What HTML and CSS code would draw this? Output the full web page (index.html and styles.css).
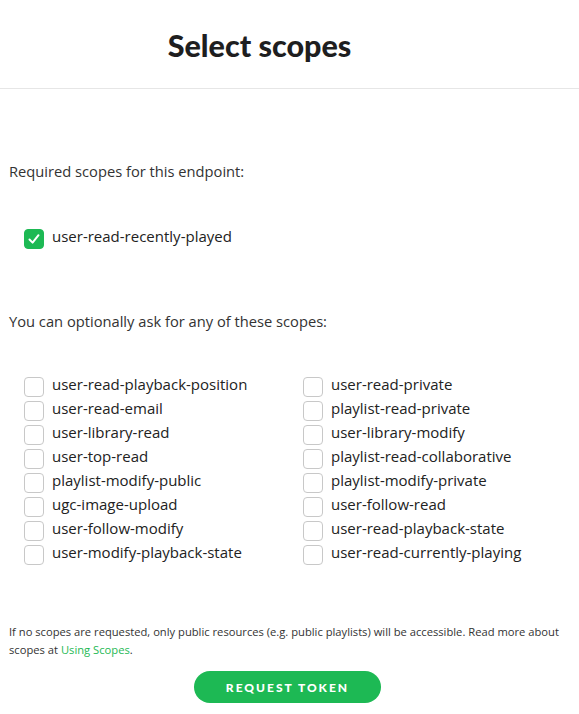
FILE: index.html
```html
<!DOCTYPE html>
<html>
<head>
<meta charset="utf-8">
<link rel="stylesheet" href="styles.css">
</head>
<body>
<header class="header">
  <h1 class="title">Select scopes</h1>
</header>
<main class="content">
  <p class="section-label required-label">Required scopes for this endpoint:</p>
  <div class="scope required-scope">
    <span class="box checked">
      <svg width="14" height="14" viewBox="0 0 14 14"><path d="M2.5 7.5 L5.6 10.6 L11.5 3.2" fill="none" stroke="#fff" stroke-width="2" stroke-linecap="round" stroke-linejoin="round"/></svg>
    </span>
    <span class="scope-name">user-read-recently-played</span>
  </div>
  <p class="section-label optional-label">You can optionally ask for any of these scopes:</p>
  <div class="scope-grid">
    <div class="scope-col">
      <div class="scope"><span class="box"></span><span class="scope-name">user-read-playback-position</span></div>
      <div class="scope"><span class="box"></span><span class="scope-name">user-read-email</span></div>
      <div class="scope"><span class="box"></span><span class="scope-name">user-library-read</span></div>
      <div class="scope"><span class="box"></span><span class="scope-name">user-top-read</span></div>
      <div class="scope"><span class="box"></span><span class="scope-name">playlist-modify-public</span></div>
      <div class="scope"><span class="box"></span><span class="scope-name">ugc-image-upload</span></div>
      <div class="scope"><span class="box"></span><span class="scope-name">user-follow-modify</span></div>
      <div class="scope"><span class="box"></span><span class="scope-name">user-modify-playback-state</span></div>
    </div>
    <div class="scope-col">
      <div class="scope"><span class="box"></span><span class="scope-name">user-read-private</span></div>
      <div class="scope"><span class="box"></span><span class="scope-name">playlist-read-private</span></div>
      <div class="scope"><span class="box"></span><span class="scope-name">user-library-modify</span></div>
      <div class="scope"><span class="box"></span><span class="scope-name">playlist-read-collaborative</span></div>
      <div class="scope"><span class="box"></span><span class="scope-name">playlist-modify-private</span></div>
      <div class="scope"><span class="box"></span><span class="scope-name">user-follow-read</span></div>
      <div class="scope"><span class="box"></span><span class="scope-name">user-read-playback-state</span></div>
      <div class="scope"><span class="box"></span><span class="scope-name">user-read-currently-playing</span></div>
    </div>
  </div>
  <p class="note">If no scopes are requested, only public resources (e.g. public playlists) will be accessible. Read more about scopes at <a class="link" href="#">Using Scopes</a>.</p>
  <div class="actions">
    <button class="btn">REQUEST TOKEN</button>
  </div>
</main>
</body>
</html>
```

FILE: styles.css
```css
* { box-sizing: border-box; }
html, body { margin: 0; padding: 0; background: #fff; }
body {
  font-family: "Open Sans", "Liberation Sans", sans-serif;
  color: #222326;
  width: 579px;
}
.header {
  height: 89px;
  border-bottom: 1px solid #e6e6e6;
  display: flex;
  align-items: center;
  justify-content: center;
  padding-right: 60px;
}
.title {
  margin: 0;
  font-family: "Lato", "Open Sans", sans-serif;
  font-weight: 900;
  font-size: 30.5px;
  line-height: 36px;
  color: #1e1e20;
  padding-top: 1px;
}
.content {
  padding: 0 9px;
}
.section-label {
  margin: 0;
  font-size: 14.7px;
  line-height: 20px;
  color: #333;
}
.required-label { margin-top: 72px; }
.optional-label { margin-top: 60px; }
.scope {
  display: flex;
  align-items: center;
  gap: 8px;
  height: 24px;
}
.required-scope {
  margin-top: 46px;
  padding-left: 15px;
}
.box {
  width: 20px;
  height: 20px;
  border: 1px solid #c8c8c8;
  border-radius: 4px;
  flex: none;
  display: flex;
  align-items: center;
  justify-content: center;
  background: #fff;
}
.box.checked {
  background: #1db954;
  border-color: #1db954;
}
.scope-name {
  font-size: 15px;
  line-height: 20px;
  color: #222;
  position: relative;
  top: -3px;
}
.scope-grid {
  margin-top: 44px;
  padding-left: 15px;
  display: grid;
  grid-template-columns: 279px 1fr;
}
.note {
  margin: 56px 0 0;
  font-size: 11.2px;
  line-height: 18px;
  color: #333;
}
.link {
  color: #1db954;
  text-decoration: none;
}
.actions {
  display: flex;
  justify-content: center;
  margin-top: 12px;
  padding-right: 4px;
}
.btn {
  width: 187px;
  height: 32px;
  border: none;
  border-radius: 16px;
  background: #1db954;
  color: #fff;
  font-family: "Lato", "Open Sans", sans-serif;
  font-weight: 900;
  font-size: 12px;
  letter-spacing: 2px;
  padding: 0;
}
```
